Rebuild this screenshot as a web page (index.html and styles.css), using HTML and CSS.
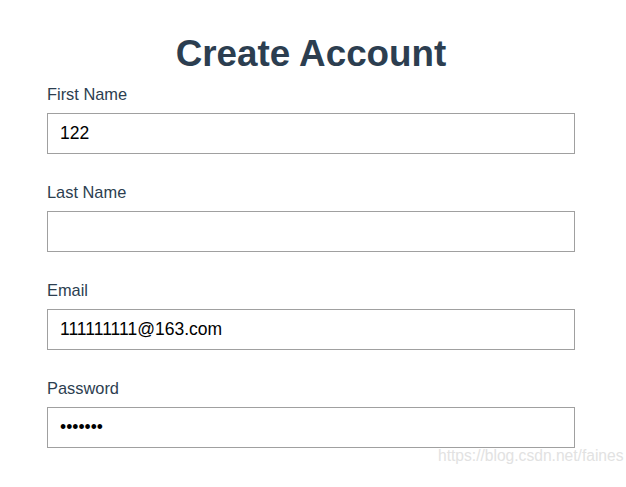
FILE: index.html
```html
<!DOCTYPE html>
<html lang="en">
<head>
    <meta charset="UTF-8">
    <meta name="viewport" content="width=device-width, initial-scale=1.0">
    <title>Create Account</title>
    <link rel="stylesheet" href="styles.css">
</head>
<body>
    <div class="container">
        <h1>Create Account</h1>
        <form class="signup">
            <div class="field">
                <label for="first">First Name</label>
                <input type="text" id="first" value="122">
            </div>
            <div class="field">
                <label for="last">Last Name</label>
                <input type="text" id="last">
            </div>
            <div class="field">
                <label for="email">Email</label>
                <input type="text" id="email" value="111111111@163.com">
            </div>
            <div class="field">
                <label for="password">Password</label>
                <input type="password" id="password" value="1234567">
            </div>
        </form>
    </div>
    <div class="watermark">https://blog.csdn.net/faines</div>
</body>
</html>
```

FILE: styles.css
```css
body {
    font-family: 'Liberation Sans', Arial, sans-serif;
    margin: 0;
    padding: 33px 0 0 47px;
    background: #fff;
    color: #2c3e50;
    height: 487px;
    box-sizing: border-box;
    overflow: hidden;
}
.container {
    width: 528px;
}
h1 {
    margin: 0 0 10px;
    text-align: center;
    font-size: 36.8px;
    font-weight: bold;
    line-height: 42px;
    color: #2c3e50;
}
.signup {
    display: flex;
    flex-direction: column;
    gap: 29px;
}
.field {
    display: flex;
    flex-direction: column;
    gap: 9px;
}
label {
    font-size: 16.4px;
    line-height: 19px;
    color: #2c3e50;
}
input {
    height: 41px;
    box-sizing: border-box;
    border: 1px solid #a0a0a0;
    border-radius: 0;
    padding: 0 12px;
    font-family: 'Liberation Sans', Arial, sans-serif;
    font-size: 17.5px;
    color: #000;
    outline: none;
}
.watermark {
    position: absolute;
    left: 438px;
    top: 447px;
    font-size: 15.6px;
    color: #e2e2e2;
}
```
